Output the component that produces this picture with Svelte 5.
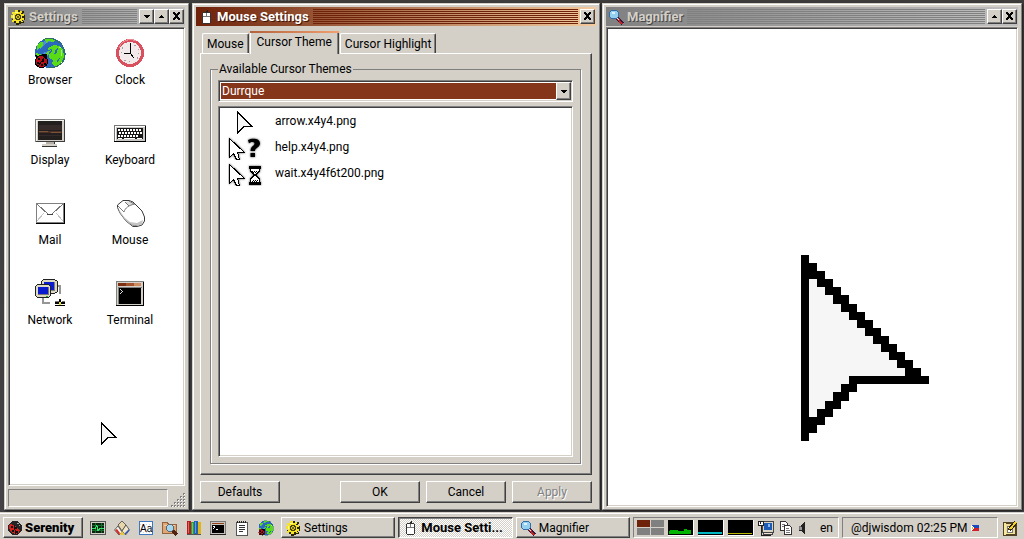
<script>
  const CURSOR_EDGES = [
    [0, 0], [1, 1], [1, 2], [2, 3], [3, 4], [4, 5], [5, 6], [6, 7], [7, 8], [8, 9], [9, 10],
    [10, 11], [11, 12], [12, 13], [13, 14], [6, 15], [5, 6], [4, 5], [3, 4], [2, 3], [1, 2], [1, 1], [0, 0]
  ];
  const apps = [
    ['browser', 'Browser'], ['clock', 'Clock'], ['display', 'Display'], ['keyboard', 'Keyboard'],
    ['mail', 'Mail'], ['mouse', 'Mouse'], ['network', 'Network'], ['terminal', 'Terminal']
  ];
  const cursors = [
    ['arrow', 'arrow.x4y4.png'], ['help', 'help.x4y4.png'], ['wait', 'wait.x4y4f6t200.png']
  ];
  const launchers = [
    ['monitor', 'System Monitor'], ['paint', 'Pixel Paint'], ['font', 'Font Editor'], ['files', 'File Manager'],
    ['books', 'Help'], ['shell', 'Terminal'], ['notes', 'Text Editor'], ['browser', 'Browser']
  ];
  const tasks = [
    ['gear', 'Settings', false], ['mouse16', 'Mouse Setti...', true], ['lens', 'Magnifier', false]
  ];
  const tabs = ['Mouse', 'Cursor Theme', 'Cursor Highlight'];
  const large = apps.map(([name]) => name);
  let tab = $state(1);
</script>

{#snippet pointer()}
  <path fill="#f6f6f6" d="M1 2L14 15H7L1 21z" />
  <path fill="#000" d="M0 0h1v23H0z" />
  {#each CURSOR_EDGES as [a, b], y}
    <rect x={a} {y} width={b - a + 1} height="1" fill="#000" />
  {/each}
{/snippet}

{#snippet icon(name, size)}
  <svg class="icon" width={size} height={size} aria-hidden="true" viewBox={large.includes(name) ? '0 0 32 32' : '0 0 16 16'}>
    {#if name === 'browser'}
      <circle cx="16" cy="16" r="15" fill="#2a67bd" />
      <path fill="#4f8fd8" d="M5 9l5-5 6-2 2 2-7 3-5 5zM9 16l5-2 1 4-5 3z" />
      <path fill="#58dc16" d="M3 8l3-3h3v3l-3 3-3 2zM11 2l5-1 5 2-2 2-5-1-2 2zM20 8l5 1 4 3 1 8-3 6-6 4-3-3 1-4-4-2 0-4 3-2 0-3-4 1 0-2zM14 14l3-1-2 3-3 4-2-1zM2 16l4 1 3 3-3 1-4-2z" />
      <path fill="#2a67bd" d="M22 12l2-1-1 5-3 1zM24 22l2-1-1 3-2 1z" />
      <path fill="#a7ea78" d="M27 13h1v6h-1zM25 10h2v1h-2z" />
      <path fill="none" stroke="#2e6f62" d="M9 2.500C18-1 30 5 31 16S22 31 14 31" />
      <path stroke="#000" fill="none" d="M1 18l3 2M13 17l-3 3M14 23h-2M1 28l2-1M13 29l-2-2" />
      <circle cx="7.500" cy="24.500" r="6" fill="#b80f18" stroke="#000" />
      <path fill="#000" d="M8 17h5v5h-2l-3-3zM4 21h2v2H4zM3 25h2v2H3zM8 23h2v2H8zM7 27h2v2H7zM10 26h2v2h-2z" />
      <path stroke="#000" d="M11 20L4 29" />
    {:else if name === 'clock'}
      <circle cx="16" cy="16" r="12.500" fill="#f1e9ea" stroke="#d9515f" stroke-width="3" />
      <path fill="none" stroke="#e98a92" d="M5 11A12 12 0 0 1 22 4" />
      <circle cx="16" cy="16" r="9" fill="none" stroke="#a4a0a2" stroke-dasharray="1 3.700" />
      <path stroke="#000" fill="none" d="M16.500 6v11M10 16.500h7M16 16l4 5" />
    {:else if name === 'display'}
      <path fill="#d4d0c8" d="M1 2h30v23H1z" /><path fill="#808080" d="M1 2h30v1H2v22H1z" />
      <path fill="#3c3c3c" d="M30 3h1v22H2v-1h28z" />
      <path fill="#f4f4f0" d="M2 3h28v1H3v20H2z" />
      <path fill="#231f1f" d="M4 4h24v19H4z" /><path fill="#4b3027" d="M5 14h23v2H5z" /><path fill="#7b5138" d="M5 14h9v1H5zM17 15h10v1H17z" />
      <path fill="#342a29" d="M5 8h23v5H5zM5 18h22v1H5z" />
      <path fill="#b4b0a8" d="M12 25h8v3h-8z" /><path fill="#d4d0c8" d="M8 27h15v2H8z" /><path fill="#333" d="M20 25h1v2h-1zM8 29h15v1H8z" />
    {:else if name === 'keyboard'}
      <path fill="#c9c7c4" d="M0 8h32v17H0z" /><path fill="#777" d="M0 8h32v1H1v15H0z" /><path fill="#000" d="M31 9h1v16H0v-1h31z" />
      <path fill="#fff" d="M1 9h30v1H2v14H1z" /><path fill="#161616" d="M3 11h26v11H3z" />
      <path fill="none" stroke="#fff" stroke-width="2" stroke-dasharray="2 1" d="M4 13h24M5 16h23M4 19h20" />
      <path stroke="#fff" stroke-width="1" d="M4 21.500h4M10 21.500h11M23 21.500h5" />
    {:else if name === 'mail'}
      <path fill="#fff" stroke="#808080" d="M2.500 6.500h27v19h-27z" /><path fill="#000" d="M30 6h1v21H2v-1h28z" />
      <path fill="none" stroke="#c5c5c5" d="M3 24l7-8M29 24l-7-8" />
      <path fill="none" stroke="#777" d="M3 7l11 10h4L29 7" /><path stroke="#444" d="M13 17.500h6" />
    {:else if name === 'mouse'}
      <g shape-rendering="auto">
        <path fill="#fff" stroke="#3a3a3a" d="M9 3.500h6l4 1.500 9 9 2.500 6v4l-2.500 4-5 1.500h-4l-7-5.500-6-8-2.500-5.500V8z" />
        <path fill="#c4c4c4" d="M4 11l6 9 6 5 7 1 6-3-1 4-5 2h-4l-7-5-6-8z" />
        <path fill="#999" d="M5 15l7 9 7 4 5 0-2 1h-3l-7-5-6-8z" />
        <path fill="#dcdcdc" d="M11 5l4 4 5-2-4-3z" />
        <path fill="none" stroke="#777" d="M11 5l4 4M15 4l5 3M4 9l6 6c1-4 5-7 11-8" />
      </g>
    {:else if name === 'network'}
      <path fill="none" stroke="#969696" stroke-width="2" d="M21 9h5v8M9 20v6h7" />
      <path fill="#dcdac0" stroke="#222" d="M9.500 2.500h11l3 2v10l-3 2h-11l-2-2v-10z" /><path fill="#808080" d="M10 5h11v9H10z" /><path fill="#0a1bd0" d="M10 5h10v8H10z" />
      <path fill="#dcdac0" stroke="#222" d="M3.500 7.500h11l2 2v9l-2 2h-11l-2-2v-9z" /><path fill="#777" d="M4 10h11v8H4z" /><path fill="#0a1bd0" d="M4 10h10v7H4z" />
      <path fill="#28a828" d="M12 19h2v1h-2z" />
      <path fill="#000" d="M21 25h10v2H21zM25 22h2v6h-2z" /><path fill="#777" d="M21 24h4v1h-4zM28 24h3v1h-3z" /><path fill="#e8df20" d="M25 25h2v3h-2z" /><path fill="#000" d="M21 28h10v1H21z" />
    {:else if name === 'terminal'}
      <path fill="#d4d0c8" d="M2 4h28v25H2z" /><path fill="#808080" d="M2 4h28v1H3v23H2z" /><path fill="#000" d="M29 5h1v24H2v-1h27z" />
      <path fill="#7e3012" d="M4 6h8v3H4z" /><path fill="#a4552f" d="M12 6h8v3h-8z" /><path fill="#cf8c60" d="M20 6h7v3h-7z" />
      <path fill="#808080" d="M4 10h24v1H5v16H4z" /><path fill="#000" d="M5 11h22v16H5z" /><path fill="#ddd" d="M6 12h1v1h1v1h1v1H8v1H7v1H6v-1h1v-1h1v-1H7v-1H6z" />
    {:else if name === 'gear'}
      <path fill="#2a2600" d="M6 1h4v2h2V2h2v2h-1v2h2v5h-2v1h1v2h-3v1H9v1H6v-2H4v-1H2v-3h1z" />
      <path fill="#f4e425" d="M5 1h3v2h2V2h2v2h-1v1h3v2h-2v2h2v2h-2v1h1v1h-2v-1H9v2H6v-2H4v1H2v-2h1V9H1V6h2V5H2V3h3z" />
      <path fill="#fffa9a" d="M5 3h3v1H5zM3 6h1v3H3z" />
      <path fill="#453e00" d="M6 5h4v1h1v4h-1v1H6v-1H5V6h1z" /><path fill="#d8c81e" d="M7 6h2v1h1v2H9v1H7V9H6V7h1z" /><path fill="#6d6721" d="M7 7h2v2H7z" />
    {:else if name === 'mouse16'}
      <path stroke="#222" fill="none" d="M8.500 4V2.500h1V1" /><path fill="#fff" stroke="#333" d="M5.500 3.500h6l1 1v9l-1 1h-6l-1-1v-9z" /><path stroke="#777" fill="none" d="M5 7.500h7M8.500 4v4" />
    {:else if name === 'lens'}
      <path stroke="#31163f" stroke-width="4" d="M9 9l6 6" /><path stroke="#c02626" stroke-width="2" d="M9 9l5 6" /><path stroke="#eee" d="M9 9l2 2" />
      <circle cx="6" cy="5.500" r="4.500" fill="#94cff0" stroke="#356da8" /><path fill="#d9f2ff" d="M4 3h3v2H4z" />
    {:else if name === 'ladybug'}
      <circle cx="8" cy="8" r="7" fill="#252525" /><path fill="#d2201c" d="M3 4l4 1 6 5-1 3-4 1-5-3-1-4z" /><path fill="#111" d="M4 6h2v2H4zM5 10h2v2H5zM8 7h2v2H8zM9 11h2v2H9z" /><path stroke="#111" d="M7 5l2 9" /><path fill="#a9a9a9" d="M10 3h2v1h-2zM12 5h1v1h-1z" />
    {:else if name === 'monitor'}
      <path fill="#d4d0c8" stroke="#555" d="M.5 1.500h15v13H.5z" /><path fill="#0a2410" d="M2 3h12v10H2z" /><path stroke="#176b2c" d="M2 5.500h12M2 10.500h12M5.500 3v10M11.500 3v10" /><path fill="none" stroke="#35e46a" d="M2 8.500h3l2-3 1 5 2-2h4" />
    {:else if name === 'paint'}
      <g shape-rendering="auto">
        <path fill="#e9d7ac" stroke="#444" stroke-width=".8" d="M8 1l4 4-4 6-4-6z" />
        <path fill="#f4f1ea" stroke="#444" stroke-width=".8" d="M4 6l4 6-3 3-4.500-5z" />
        <path fill="#f1e6c8" stroke="#444" stroke-width=".8" d="M12 5l3.500 5-4 5L8 11z" />
        <path fill="#d52a2a" d="M1 10l2-1 3 4-1 2z" /><path fill="#e6c938" d="M6 14l2-3 3 4H7z" /><path fill="#3556c3" d="M11 13l4-4v2l-4 4z" />
      </g>
    {:else if name === 'font'}
      <path fill="#fff" stroke="#3c78c0" d="M1.500 1.500h13v13h-13z" /><path stroke="#c3d6ee" stroke-dasharray="1 2" d="M2 4.500h12M2 12.500h12" /><text x="2" y="12" font-size="10" font-family="Liberation Sans">Aa</text>
    {:else if name === 'files'}
      <path fill="#dda877" stroke="#95633d" d="M.5 2.500h5l1 2h8v9H.5z" /><path fill="#f2cba2" d="M2 5h11v1H2z" /><path stroke="#532311" stroke-width="3" d="M10 10l5 5" /><circle cx="8" cy="8" r="3.500" fill="#a5d8f0" stroke="#5c6770" />
    {:else if name === 'books'}
      <path fill="#bd191b" d="M1 1h4v13H1z" /><path fill="#25a239" d="M5 2h3v13H5z" /><path fill="#1f63b3" d="M8 1h4v13H8z" /><path fill="#dfb51b" d="M12 2h3v13h-3z" /><path stroke="#fff" opacity=".35" d="M2.500 2v11M6.500 3v11M9.500 2v11" /><path fill="#555" d="M1 14h14v1H1z" />
    {:else if name === 'shell'}
      <path fill="#c7c4bd" stroke="#777" d="M.5 1.500h15v13H.5z" /><path fill="#93421e" d="M2 3h12v1H2z" /><path fill="#000" d="M2 5h12v8H2z" /><path fill="none" stroke="#fff" d="M3 6l2 1-2 2M6 9.500h2" /><path fill="#222" d="M0 14h16v1H0z" />
    {:else if name === 'notes'}
      <path fill="#fff" stroke="#555" d="M2.500 2.500h11v13h-11z" /><path stroke="#222" stroke-width="2" stroke-dasharray="1 1" d="M3 2h10" /><path stroke="#333" d="M5 5.500h6M5 7.500h6M5 9.500h6M5 11.500h4" />
    {:else if name === 'net16'}
      <path fill="#d8d5c6" stroke="#444" d="M4.500 1.500h11v11h-11z" /><path fill="#1d5cb4" d="M6 3h8v7H6z" /><path fill="#84b9f0" d="M10 4h2v3h-2z" /><path fill="#e8e4d8" stroke="#444" d="M5.500 12.500h9v2h-9z" /><path fill="#fff" stroke="#222" d="M.5 1.500h5v4h-5z" /><path stroke="#222" d="M2.500 1v3M3 6v9.500h10" fill="none" />
    {:else if name === 'clip'}
      <path fill="#fff" stroke="#333" d="M2.500 1.500h5l2 2v7h-7z" /><path fill="#fff" stroke="#333" d="M6.500 5.500h5l2 2v7h-7z" /><path stroke="#777" d="M4 4.500h3M4 6.500h2M8 8.500h3M8 10.500h4M8 12.500h4" />
    {:else if name === 'sound'}
      <path fill="#777" d="M1 6h2v5H1zM4 5h1v7H4z" /><path fill="#222" d="M3 5h1V4h1V3h1V2h1v12H6v-1H5v-1H4v-1H1v-1h3z" /><path fill="#999" d="M2 7h2v3H2z" />
    {:else if name === 'pencil'}
      <path fill="#eadb9a" stroke="#514324" stroke-width="2" d="M2 3h12v12H2z" /><path fill="#f7e99a" d="M2 3h2v12H2zM4 13h9v1H4z" /><path stroke="#777" fill="#fff" d="M5.500 6.500h5v6h-5z" /><path stroke="#332509" stroke-width="4" d="M7 10l7-8" /><path stroke="#f5d12b" stroke-width="2" d="M8 9l6-7" />
    {/if}
  </svg>
{/snippet}

{#snippet glyph(kind)}
  <svg width="9" height="9" viewBox="0 0 9 9" aria-hidden="true">
    {#if kind === 'close'}
      <path d="M1 0h2v1h1v1h1V1h1V0h2v2H7v1H6v2h1v1h1v2H6V7H5V6H4v1H3v1H1V6h1V5h1V3H2V2H1z" />
    {:else if kind === 'up'}
      <path d="M4 3h1v1h1v1h1v1H2V5h1V4h1z" />
    {:else}
      <path d="M2 3h6v1H7v1H6v1H4V5H3V4H2z" />
    {/if}
  </svg>
{/snippet}

{#snippet titlebar(name, title, buttons, active)}
  <header class="titlebar" class:active>
    {@render icon(name, 16)}
    <h2>{title}</h2>
    <span class="stripes"></span>
    <div class="controls">
      {#each buttons as b}
        <button class="raised control" aria-label={b}>{@render glyph(b)}</button>
      {/each}
    </div>
  </header>
{/snippet}

<div class="screen">
  <main class="desktop">
    <section class="window settings">
      {@render titlebar('gear', 'Settings', ['down', 'up', 'close'], false)}
      <div class="sunken client">
        <div class="apps">
          {#each apps as [name, label]}
            <button class="app">{@render icon(name, 32)}<span>{label}</span></button>
          {/each}
        </div>
        <svg class="pointer" width="16" height="23" viewBox="0 0 16 23" aria-hidden="true">{@render pointer()}</svg>
      </div>
      <footer class="status">
        <div class="message"></div>
        <svg width="14" height="14" viewBox="0 0 14 14" aria-hidden="true">
          {#each [0, 1, 2, 3, 4] as r}
            {#each [0, 1, 2, 3, 4] as c}
              {#if r + c >= 4}
                <path fill="#fff" d="M{c * 3 + 1} {r * 3 + 1}h1v1h-1z" />
                <path fill="#808080" d="M{c * 3} {r * 3}h1v1h-1z M{c * 3 + 1} {r * 3}h1v1h-1z M{c * 3} {r * 3 + 1}h1v1h-1z" />
              {/if}
            {/each}
          {/each}
        </svg>
      </footer>
    </section>

    <section class="window mouse">
      {@render titlebar('mouse16', 'Mouse Settings', ['close'], true)}
      <div class="body">
        <div class="tabs" role="tablist">
          {#each tabs as t, i}
            <button class="tab" role="tab" aria-selected={tab === i} class:selected={tab === i} onclick={() => (tab = i)}>{t}</button>
          {/each}
        </div>
        <div class="page">
          <fieldset>
            <legend>Available Cursor Themes</legend>
            <div class="sunken combo">
              <select aria-label="Cursor theme"><option>Durrque</option></select>
              <span class="raised arrow">{@render glyph('down')}</span>
            </div>
            <ul class="sunken list">
              {#each cursors as [kind, file]}
                <li>
                  <svg width="36" height="26" viewBox="0 0 36 26" aria-hidden="true">
                    {#if kind === 'arrow'}
                      <g transform="translate(9 3)">{@render pointer()}</g>
                    {:else}
                      <g class="halo">
                        <path fill="#fff" stroke="#000" d="M1.500 4.500v19l4-4 3 6h3l-2-7h7z" />
                        {#if kind === 'help'}
                          <path fill="#000" shape-rendering="auto" d="M20 6c4-2 12-2 12 3.500 0 4-5 4-5 7.500h-4.500c0-5 4-5 4-7.500 0-2-4-2-5.500 0zM22.500 19h4.500v4h-4.500z" />
                        {:else}
                          <path fill="#fff" stroke="#000" d="M22.500 8v3l4 4-4 4v4h9v-4l-4-4 4-4V8z" />
                          <path fill="#000" d="M21 6h12v3H21zM21 22h12v3H21z" /><path stroke="#000" stroke-dasharray="1 1" d="M24 11.500h6M25 12.500h5M25 20.500h5M24 21.500h6" />
                        {/if}
                      </g>
                    {/if}
                  </svg>
                  <span>{file}</span>
                </li>
              {/each}
            </ul>
          </fieldset>
        </div>
        <div class="actions">
          <button class="raised push">Defaults</button>
          <span class="grow"></span>
          <button class="raised push">OK</button>
          <button class="raised push">Cancel</button>
          <button class="raised push" disabled>Apply</button>
        </div>
      </div>
    </section>

    <section class="window magnifier">
      {@render titlebar('lens', 'Magnifier', ['up', 'close'], false)}
      <div class="sunken client view">
        <svg width="128" height="186" viewBox="0 0 16 23" preserveAspectRatio="none" aria-hidden="true">{@render pointer()}</svg>
      </div>
    </section>
  </main>

  <nav class="taskbar">
    <button class="raised start">{@render icon('ladybug', 16)}<b>Serenity</b></button>
    <div class="launch">
      {#each launchers as [name, label]}
        <button class="flat" aria-label={label}>{@render icon(name, 16)}</button>
      {/each}
    </div>
    <div class="tasks">
      {#each tasks as [name, label, on]}
        <button class="raised task" class:on>{@render icon(name, 16)}<span>{label}</span></button>
      {/each}
    </div>
    <div class="tray applets">
      <div class="spaces"><i class="here"></i><i></i><i></i><i></i></div>
      <svg class="graph" width="26" height="16" viewBox="0 0 26 16" aria-hidden="true"><path fill="#00b400" d="M1 12h1v-1h8v1h7v-2h3v1h4v4H1z" /></svg>
      <svg class="graph" width="26" height="16" viewBox="0 0 26 16" aria-hidden="true"><path fill="#00b8c0" d="M0 13h25v2H0z" /></svg>
      <svg class="graph" width="26" height="16" viewBox="0 0 26 16" aria-hidden="true"><path fill="#b8b400" d="M0 14h25v1H0z" /></svg>
      {@render icon('net16', 16)}
      {@render icon('clip', 16)}
      {@render icon('sound', 16)}
      <span class="lang">en</span>
    </div>
    <div class="tray clock">
      <span>@djwisdom 02:25 PM</span>
      <svg width="8" height="8" viewBox="0 0 8 8" aria-hidden="true"><path fill="#1a49c0" d="M0 1h8v3H0z" /><path fill="#d0202c" d="M0 4h8v3H0z" /><path fill="#fff" d="M0 1l4 3-4 3z" /><path fill="#e8c020" d="M1 3h1v2H1z" /></svg>
    </div>
    <button class="flat" aria-label="Notes">{@render icon('pencil', 16)}</button>
  </nav>
</div>

<style>
  :global(body) { margin: 0; background: #404040; }
  .screen {
    display: flex; flex-direction: column; height: 100vh; overflow: hidden;
    font: 12px/16px Roboto, "Liberation Sans", sans-serif; color: #000;
    background: linear-gradient(#3e3d3b, #454346);
  }
  .screen * { box-sizing: border-box; }
  svg { display: block; flex: none; shape-rendering: crispEdges; }
  button { font: inherit; color: inherit; padding: 0; border: 0; background: none; border-radius: 0; }
  h2 { margin: 0; font-size: 13px; font-weight: 700; }

  .desktop { flex: 1; min-height: 0; display: flex; gap: 3px; padding: 3px 2px 2px 4px; }
  .window {
    display: flex; flex-direction: column; min-width: 0; background: #d4d0c8;
    border: 1px solid; border-color: #d4d0c8 #808080 #808080 #d4d0c8;
    box-shadow: inset 1px 1px #fff, 1px 1px 2px #1c1c1c;
    padding: 3px 3px 2px;
  }
  .settings { flex: 0 0 185px; }
  .mouse { flex: 0 0 408px; }
  .magnifier { flex: 1; margin-left: -1px; }

  .titlebar {
    display: flex; align-items: center; height: 19px; padding: 0 1px 0 2px; flex: none;
    background: linear-gradient(90deg, #808080, #c0c0c0); color: #d4d0c8;
  }
  .titlebar h2 { margin: 0 4px 0 3px; text-shadow: 1px 1px #484848; white-space: nowrap; }
  .titlebar.active { background: linear-gradient(90deg, #6e2209, #f4ca9e); color: #fff; }
  .titlebar.active h2 { text-shadow: 1px 1px #421405; }
  .stripes { flex: 1; height: 15px; margin-right: 2px; background: repeating-linear-gradient(#808080 0 1px, transparent 1px 2px); }
  .active .stripes { background: repeating-linear-gradient(#6e2209 0 1px, transparent 1px 2px); }
  .controls { display: flex; }
  .control { width: 15px; height: 15px; display: grid; place-items: center; }

  .raised {
    background: #d4d0c8; border: 1px solid; border-color: #fff #404040 #404040 #fff;
    box-shadow: inset -1px -1px #808080;
  }
  .sunken {
    background: #fff; border: 1px solid; border-color: #808080 #fff #fff #808080;
    box-shadow: inset 1px 1px #404040, inset -1px -1px #d4d0c8;
  }
  .client { position: relative; flex: 1; min-height: 0; margin-top: 1px; }
  .apps { display: grid; grid-template-columns: repeat(2, 80px); grid-auto-rows: 80px; padding: 9px 1px; }
  .app { display: flex; flex-direction: column; align-items: center; gap: 3px; justify-content: flex-start; }
  .pointer { position: absolute; left: 92px; top: 394px; }
  .status { display: flex; align-items: flex-end; justify-content: space-between; gap: 3px; padding: 3px 0 0; flex: none; }
  .message { flex: 1; height: 18px; border: 1px solid; border-color: #808080 #fff #fff #808080; }

  .body { flex: 1; min-height: 0; display: flex; flex-direction: column; padding: 5px 4px 4px; }
  .tabs { display: flex; align-items: flex-end; height: 22px; padding-left: 2px; flex: none; }
  .tab {
    height: 20px; padding: 0 4px; border: 1px solid; border-color: #fff #404040 transparent #fff; border-bottom: 0;
    border-radius: 2px 2px 0 0; box-shadow: inset -1px 0 #808080; background: #d4d0c8; white-space: nowrap;
  }
  .tab.selected {
    height: 23px; margin-bottom: -1px; padding: 0 7px 3px; position: relative;
    border-top: 2px solid; border-image: linear-gradient(90deg, #b4623c, #f0a070) 2 0 0;
    box-shadow: inset 1px 0 #fff, inset -1px 0 #404040, inset -2px 0 #808080;
  }
  .page {
    flex: 1; min-height: 0; display: flex; padding: 7px 10px 10px 9px;
    border: 1px solid; border-color: #fff #404040 #404040 #fff; box-shadow: inset -1px -1px #808080;
  }
  fieldset {
    flex: 1; min-width: 0; margin: 0; padding: 3px 7px 6px; border: 1px solid #808080;
    box-shadow: 1px 1px #fff, inset 1px 0 #fff;
    display: flex; flex-direction: column; gap: 4px;
  }
  legend { padding: 0 1px; }
  .combo { position: relative; height: 22px; flex: none; padding: 2px 16px 2px 2px; display: flex; }
  select {
    appearance: none; flex: 1; min-width: 0; border: 0; border-radius: 0; margin: 0; padding: 0 1px; background: #84351a; color: #fff;
    font: inherit;
  }
  .arrow { position: absolute; right: 1px; top: 1px; bottom: 1px; width: 15px; display: grid; place-items: center; pointer-events: none; }
  .list { flex: 1; min-height: 0; margin: 0; padding: 1px 9px; list-style: none; }
  .list li { display: flex; align-items: center; gap: 11px; height: 26px; }
  .halo { filter: drop-shadow(0 0 1px #555); }
  .actions { display: flex; gap: 6px; padding-top: 6px; flex: none; }
  .grow { flex: 1; }
  .push { width: 80px; height: 22px; }
  .push:disabled { color: #808080; text-shadow: 1px 1px #fff; }

  .view svg { position: absolute; left: 194px; top: 227px; }

  .taskbar {
    flex: none; display: flex; align-items: center; height: 27px; padding: 3px 6px 0 3px;
    background: #d4d0c8; border-top: 1px solid #d4d0c8; box-shadow: inset 0 1px #fff;
  }
  .start { display: flex; align-items: center; gap: 2px; width: 80px; height: 21px; padding: 0 3px; font-size: 13px; font-weight: 700; }
  .launch { display: flex; gap: 8px; padding: 0 7px; }
  .tasks { display: flex; gap: 3px; flex: 1; min-width: 0; }
  .task { flex: 1; min-width: 0; height: 21px; display: flex; align-items: center; gap: 3px; padding: 0 3px; white-space: nowrap; overflow: hidden; }
  .task.on {
    font-size: 13px; font-weight: 700; border-color: #404040 #fff #fff #404040; box-shadow: inset 1px 1px #808080;
    background: repeating-conic-gradient(#fff 0 25%, #d4d0c8 0 50%) 0 0 / 2px 2px;
  }
  .tray { display: flex; align-items: center; height: 21px; margin-left: 3px; border: 1px solid; border-color: #808080 #fff #fff #808080; }
  .applets { gap: 4px; padding: 0 4px 0 3px; width: 206px; }
  .spaces { display: grid; grid-template-columns: 13px 13px; grid-auto-rows: 7px; gap: 1px; }
  .spaces i { background: #808080; }
  .spaces .here { background: #6e2209; }
  .graph { background: #000; border-right: 1px solid #fff; border-bottom: 1px solid #fff; }
  .lang { margin-left: auto; padding-right: 1px; }
  .clock { width: 156px; padding-left: 8px; gap: 3px; margin-right: 4px; white-space: nowrap; }
</style>
